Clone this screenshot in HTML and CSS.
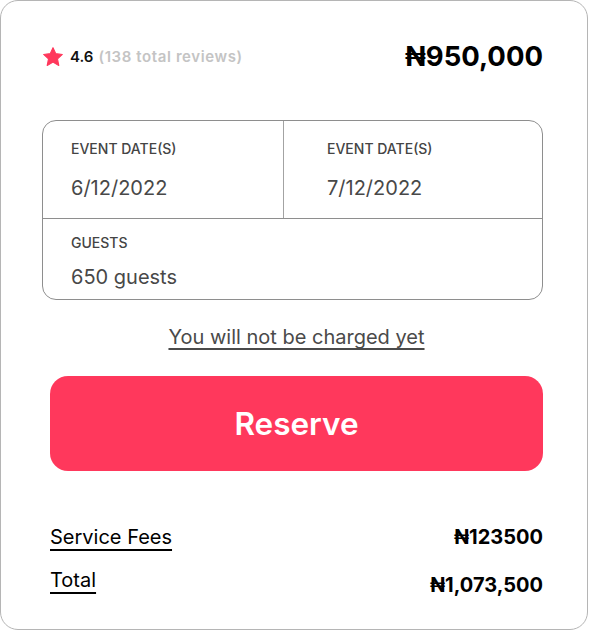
FILE: index.html
```html
<!DOCTYPE html>
<html lang="en">
<head>
<meta charset="utf-8">
<title>Reserve</title>
<link rel="stylesheet" href="styles.css">
</head>
<body>
<div class="card">
  <div class="header">
    <div class="rating">
      <svg class="star" viewBox="0 0 24 24" width="22" height="22" aria-hidden="true">
        <path d="M12 1.8l3.05 6.55 7.15.85-5.3 4.9 1.42 7.08L12 17.6l-6.32 3.58 1.42-7.08-5.3-4.9 7.15-.85z" fill="#ff385c" stroke="#ff385c" stroke-width="1.2" stroke-linejoin="round"/>
      </svg>
      <span class="score">4.6</span>
      <span class="reviews">(138 total reviews)</span>
    </div>
    <div class="price">₦950,000</div>
  </div>

  <div class="booking">
    <div class="dates">
      <div class="cell">
        <div class="label">EVENT DATE(S)</div>
        <div class="value">6/12/2022</div>
      </div>
      <div class="cell cell-right">
        <div class="label">EVENT DATE(S)</div>
        <div class="value">7/12/2022</div>
      </div>
    </div>
    <div class="guests">
      <div class="label">GUESTS</div>
      <div class="value">650 guests</div>
    </div>
  </div>

  <div class="note"><span>You will not be charged yet</span></div>

  <button class="reserve">Reserve</button>

  <div class="fees">
    <div class="fee-row">
      <span class="fee-name">Service Fees</span>
      <span class="fee-value">₦123500</span>
    </div>
    <div class="fee-row fee-total">
      <span class="fee-name">Total</span>
      <span class="fee-value">₦1,073,500</span>
    </div>
  </div>
</div>
</body>
</html>
```
FILE: styles.css
```css
* { box-sizing: border-box; }
html, body {
  margin: 0;
  padding: 0;
  background: #ffffff;
}
body {
  font-family: Inter, "Noto Sans", "Liberation Sans", sans-serif;
  color: #000;
}
.card {
  width: 588px;
  height: 630px;
  border: 1px solid #b5b5b5;
  border-radius: 18px;
  padding: 37px 44px 0 41px;
  display: flex;
  flex-direction: column;
}
.header {
  display: flex;
  align-items: center;
  justify-content: space-between;
  height: 36px;
}
.rating {
  display: flex;
  align-items: center;
  font-size: 15px;
  font-weight: 600;
  margin-top: 1px;
}
.star { display: block; margin-right: 6px; }
.score { color: #111; margin-right: 5px; }
.reviews { color: #c4c4c4; font-weight: 600; letter-spacing: 0.6px; }
.price {
  font-size: 27.5px;
  font-weight: 700;
  color: #000;
}
.booking {
  margin-top: 46px;
  border: 1px solid #8e8e8e;
  border-radius: 14px;
  overflow: hidden;
  color: #474747;
}
.dates {
  display: grid;
  grid-template-columns: 240px 1fr;
  border-bottom: 1px solid #8e8e8e;
}
.cell {
  padding: 20px 28px 18px;
}
.cell-right {
  border-left: 1px solid #a3a3a3;
  padding-left: 43px;
}
.label {
  font-size: 14px;
  font-weight: 500;
  line-height: 16px;
  color: #444;
}
.value {
  font-size: 20px;
  line-height: 24px;
  margin-top: 19px;
  color: #484848;
}
.guests {
  padding: 16px 28px 10px;
}
.guests .value { margin-top: 14px; }
.note {
  margin-top: 25px;
  text-align: center;
  padding-left: 8px;
  font-size: 20px;
  line-height: 24px;
  color: #4a4a4a;
}
.note span {
  text-decoration: underline;
  text-underline-offset: 4px;
  text-decoration-thickness: 1.5px;
}
.reserve {
  margin: 27px 0 0 8px;
  height: 95px;
  border: none;
  border-radius: 18px;
  background: #ff385c;
  color: #fff;
  font-family: inherit;
  font-size: 31.5px;
  font-weight: 600;
}
.fees {
  margin: 54px 0 0 8px;
  display: flex;
  flex-direction: column;
  gap: 19px;
}
.fee-row {
  display: flex;
  justify-content: space-between;
  align-items: center;
  font-size: 20px;
  line-height: 24px;
}
.fee-name {
  text-decoration: underline;
  text-underline-offset: 5px;
  text-decoration-thickness: 1.5px;
}
.fee-value { font-weight: 700; }
.fee-total .fee-value { position: relative; top: 5px; }
```
